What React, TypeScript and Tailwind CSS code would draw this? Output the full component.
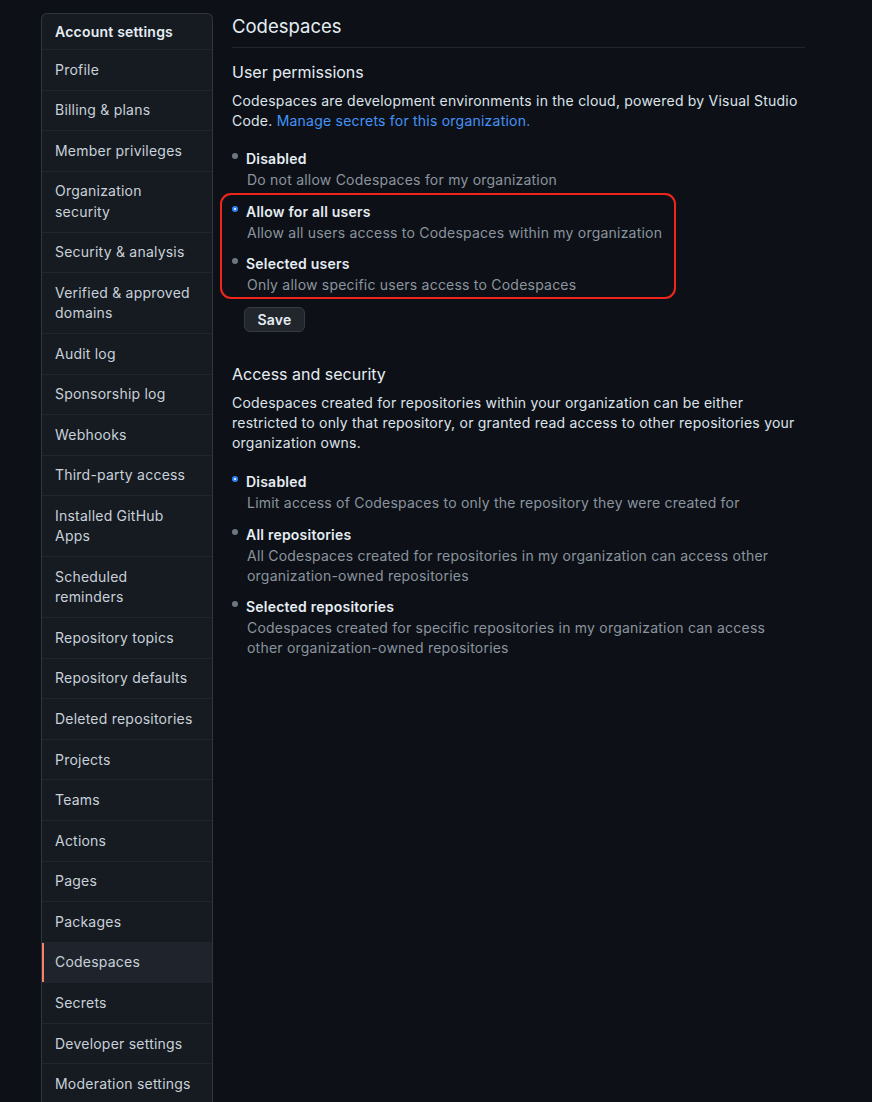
import React from "react";

const items: { label: React.ReactNode; key: string; active?: boolean }[] = [
  { key: "p", label: "Profile" },
  { key: "b", label: "Billing & plans" },
  { key: "m", label: "Member privileges" },
  { key: "o", label: <>Organization<br />security</> },
  { key: "s", label: "Security & analysis" },
  { key: "v", label: <>Verified &amp; approved<br />domains</> },
  { key: "a", label: "Audit log" },
  { key: "sp", label: "Sponsorship log" },
  { key: "w", label: "Webhooks" },
  { key: "t", label: "Third-party access" },
  { key: "i", label: <>Installed GitHub<br />Apps</> },
  { key: "sr", label: <>Scheduled<br />reminders</> },
  { key: "rt", label: "Repository topics" },
  { key: "rd", label: "Repository defaults" },
  { key: "dr", label: "Deleted repositories" },
  { key: "pr", label: "Projects" },
  { key: "te", label: "Teams" },
  { key: "ac", label: "Actions" },
  { key: "pa", label: "Pages" },
  { key: "pk", label: "Packages" },
  { key: "c", label: "Codespaces", active: true },
  { key: "se", label: "Secrets" },
  { key: "d", label: "Developer settings" },
  { key: "mo", label: "Moderation settings" },
];

function Radio({ checked }: { checked?: boolean }) {
  return checked ? (
    <span className="mt-[4px] flex h-[6px] w-[6px] shrink-0 items-center justify-center rounded-full bg-[#2f81f7]">
      <span className="h-[2px] w-[2px] rounded-full bg-white" />
    </span>
  ) : (
    <span className="mt-[4px] h-[6px] w-[6px] shrink-0 rounded-full bg-[#6e7681]" />
  );
}

function Option({
  checked,
  label,
  desc,
}: {
  checked?: boolean;
  label: string;
  desc: string;
}) {
  return (
    <div className="flex items-start gap-[8px]">
      <Radio checked={checked} />
      <div>
        <div className="font-semibold leading-[20px] text-[#e6edf3]">{label}</div>
        <div className="mt-[1px] leading-[20px] text-[#8b949e] pl-[1px]">{desc}</div>
      </div>
    </div>
  );
}

export default function App() {
  return (
    <div
      className="min-h-[1102px] bg-[#0d1117] text-[14px] tracking-[0.22px] text-[#c9d1d9]"
      style={{ fontFamily: "Inter, 'Noto Sans', 'Liberation Sans', sans-serif" }}
    >
      <div className="flex gap-[19px] pl-[41px] pt-[13px]">
        {/* Sidebar */}
        <nav className="w-[172px] shrink-0 self-start rounded-t-[6px] border border-b-0 border-[#30363d] bg-[#161b22]">
          <div className="border-b border-[#21262d] px-[13px] py-[8px] font-semibold leading-[19px] text-[#e6edf3]">
            Account settings
          </div>
          {items.map((it) => (
            <div
              key={it.key}
              className={
                it.active
                  ? "relative whitespace-nowrap border-b border-[#21262d] bg-[#1f242c] px-[13px] py-[9.65px] leading-[20.3px] text-[#c9d1d9]"
                  : "relative whitespace-nowrap border-b border-[#21262d] px-[13px] py-[9.65px] leading-[20.3px] text-[#c9d1d9]"
              }
            >
              {it.active && (
                <span className="absolute bottom-0 left-0 top-0 w-[2px] bg-[#f78166]" />
              )}
              {it.label}
            </div>
          ))}
        </nav>

        {/* Main */}
        <main className="relative w-[573px] -mt-[13px]">
          <div className="border-b border-[#21262d] pb-[6px] pt-[11px] text-[18.5px] leading-[30px] tracking-normal text-[#e6edf3]">
            Codespaces
          </div>

          <h2 className="mt-[12px] text-[16px] leading-[24px] tracking-normal text-[#e6edf3]">User permissions</h2>
          <p className="mt-[7px] leading-[20px] text-[#dde3ea]">
            Codespaces are development environments in the cloud, powered by Visual Studio Code.{" "}
            <a className="text-[#4493f8]">Manage secrets for this organization.</a>
          </p>

          <div className="mt-[18px] flex flex-col gap-[11.5px]">
            <Option label="Disabled" desc="Do not allow Codespaces for my organization" />
            <Option
              checked
              label="Allow for all users"
              desc="Allow all users access to Codespaces within my organization"
            />
            <Option label="Selected users" desc="Only allow specific users access to Codespaces" />
          </div>

          <button className="ml-[12px] mt-[12px] h-[25px] w-[61px] rounded-[6px] border border-[#363b42] bg-[#21262d] font-semibold leading-[20px] text-[#e6edf3]">
            Save
          </button>

          {/* annotation */}
          <div className="pointer-events-none absolute left-[-12px] top-[193px] h-[106px] w-[456px] rounded-[11px] border-[2.5px] border-[#f0261d]" />

          <h2 className="mt-[30px] text-[16px] leading-[24px] tracking-normal text-[#e6edf3]">Access and security</h2>
          <p className="mt-[7px] leading-[20px] text-[#dde3ea]">
            Codespaces created for repositories within your organization can be either restricted to only that repository, or granted read access to other repositories your organization owns.
          </p>

          <div className="mt-[19px] flex flex-col gap-[11.5px]">
            <Option
              checked
              label="Disabled"
              desc="Limit access of Codespaces to only the repository they were created for"
            />
            <Option
              label="All repositories"
              desc="All Codespaces created for repositories in my organization can access other organization-owned repositories"
            />
            <Option
              label="Selected repositories"
              desc="Codespaces created for specific repositories in my organization can access other organization-owned repositories"
            />
          </div>
        </main>
      </div>
    </div>
  );
}
